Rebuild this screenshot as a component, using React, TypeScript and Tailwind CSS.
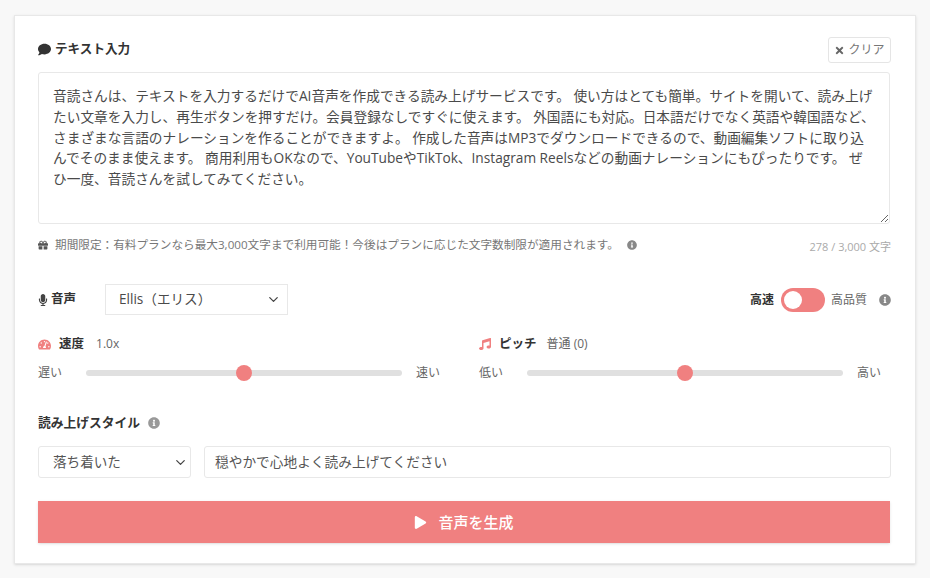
import { FaComment, FaTimes, FaGift, FaInfoCircle, FaMicrophone, FaTachometerAlt, FaMusic, FaPlay } from 'react-icons/fa';
import { ChevronDown } from 'lucide-react';

const sampleText =
  '音読さんは、テキストを入力するだけでAI音声を作成できる読み上げサービスです。 使い方はとても簡単。サイトを開いて、読み上げたい文章を入力し、再生ボタンを押すだけ。会員登録なしですぐに使えます。 外国語にも対応。日本語だけでなく英語や韓国語など、さまざまな言語のナレーションを作ることができますよ。 作成した音声はMP3でダウンロードできるので、動画編集ソフトに取り込んでそのまま使えます。 商用利用もOKなので、YouTubeやTikTok、Instagram Reelsなどの動画ナレーションにもぴったりです。 ぜひ一度、音読さんを試してみてください。';

function Slider({ min, max }: { min: string; max: string }) {
  return (
    <div className="flex items-center h-[20px]">
      <span className="w-[48px] text-[12px] text-[#666]">{min}</span>
      <div className="relative w-[316px] h-[6px] rounded-full bg-[#e0e0e0]">
        <div className="absolute left-1/2 top-1/2 -translate-x-1/2 -translate-y-1/2 w-[16px] h-[16px] rounded-full bg-[#f08080]" />
      </div>
      <span className="pl-[14px] text-[12px] text-[#666]">{max}</span>
    </div>
  );
}

export default function App() {
  return (
    <div className="h-[578px] bg-[#f8f8f8] pt-[15px] px-[14px] overflow-hidden font-['Open_Sans','Noto_Sans_CJK_JP',sans-serif]">
      <div className="w-[902px] h-[549px] bg-white border border-[#e8e8e8] shadow-sm pl-[23px] pr-[24px]">
        {/* テキスト入力 */}
        <div className="flex items-center justify-between h-[56px] pt-[14px]">
          <div className="flex items-center gap-[4px] text-[12.6px] font-bold text-[#333] -mt-[3px]">
            <FaComment className="w-[13px] h-[13px]" />
            <span>テキスト入力</span>
          </div>
          <button className="flex items-center justify-center gap-[3px] w-[63px] h-[26px] border border-[#e5e5e5] rounded-[3px] text-[12px] text-[#777] -mt-[2px]">
            <FaTimes className="w-[11px] h-[11px] text-[#666]" />
            <span>クリア</span>
          </button>
        </div>
        <textarea
          readOnly
          value={sampleText}
          className="block w-[852px] h-[152px] border border-[#e8e8e8] rounded-[3px] px-[14px] py-[13px] text-[13.7px] leading-[20.8px] text-[#4a4a4a] outline-none"
        />

        <div className="flex items-start justify-between mt-[8px] h-[50px]">
          <div className="flex items-center text-[11.65px] text-[#777] pt-[4px]">
            <FaGift className="w-[10px] h-[10px] text-[#555] mr-[7px]" />
            <span>期間限定：有料プランなら最大3,000文字まで利用可能！今後はプランに応じた文字数制限が適用されます。</span>
            <FaInfoCircle className="w-[10px] h-[10px] text-[#888] ml-[8px]" />
          </div>
          <span className="text-[11px] text-[#aaa] pt-[7px]">278 / 3,000 文字</span>
        </div>

        {/* 音声 */}
        <div className="flex items-center justify-between h-[33px] mt-[1px]">
          <div className="flex items-center">
            <div className="flex items-center gap-[3px] w-[67px] text-[12.5px] font-bold text-[#333]">
              <FaMicrophone className="w-[10px] h-[12px] text-[#444]" />
              <span>音声</span>
            </div>
            <div className="flex items-center justify-between w-[183px] h-[31px] border border-[#e8e8e8] pl-[13px] pr-[6px] text-[13.6px] text-[#4a4a4a]">
              <span>Ellis（エリス）</span>
              <ChevronDown className="w-[15px] h-[15px] text-[#444]" />
            </div>
          </div>
          <div className="flex items-center">
            <span className="text-[12px] font-bold text-[#333]">高速</span>
            <div className="flex items-center w-[44px] h-[24px] ml-[7px] rounded-full bg-[#f08080] pl-[3px]">
              <div className="w-[18px] h-[18px] rounded-full bg-white" />
            </div>
            <span className="ml-[6px] text-[12px] text-[#666]">高品質</span>
            <FaInfoCircle className="w-[12px] h-[12px] text-[#888] ml-[12px]" />
          </div>
        </div>

        {/* 速度 / ピッチ */}
        <div className="grid grid-cols-[402px_402px] gap-x-[39px] mt-[16px]">
          <div>
            <div className="flex items-center h-[24px] text-[12.5px]">
              <FaTachometerAlt className="w-[13px] h-[13px] text-[#f08080]" />
              <span className="ml-[8px] font-bold text-[#333]">速度</span>
              <span className="ml-[12px] text-[12px] text-[#666]">1.0x</span>
            </div>
            <div className="mt-[7px]">
              <Slider min="遅い" max="速い" />
            </div>
          </div>
          <div>
            <div className="flex items-center h-[24px] text-[12.5px]">
              <FaMusic className="w-[12px] h-[12px] text-[#f08080]" />
              <span className="ml-[8px] font-bold text-[#333]">ピッチ</span>
              <span className="ml-[10px] text-[12px] text-[#666]">普通 (0)</span>
            </div>
            <div className="mt-[7px]">
              <Slider min="低い" max="高い" />
            </div>
          </div>
        </div>

        {/* 読み上げスタイル */}
        <div className="flex items-center gap-[8px] mt-[30px] h-[20px] text-[12.75px] font-bold text-[#333]">
          <span>読み上げスタイル</span>
          <FaInfoCircle className="w-[12px] h-[12px] text-[#999]" />
        </div>
        <div className="flex gap-[13px] mt-[13px]">
          <div className="flex items-center justify-between w-[153px] h-[32px] border border-[#e8e8e8] rounded-[3px] pl-[14px] pr-[2px] text-[13.6px] text-[#555]">
            <span>落ち着いた</span>
            <ChevronDown className="w-[15px] h-[15px] text-[#444]" />
          </div>
          <div className="flex items-center flex-1 h-[32px] border border-[#e8e8e8] rounded-[3px] px-[10px] text-[13.7px] text-[#555]">
            穏やかで心地よく読み上げてください
          </div>
        </div>

        <button className="flex items-center justify-center gap-[11px] w-[852px] h-[42px] mt-[23px] bg-[#f08080] text-white text-[15px] font-medium shadow-sm">
          <FaPlay className="w-[13px] h-[13px]" />
          <span>音声を生成</span>
        </button>
      </div>
    </div>
  );
}
